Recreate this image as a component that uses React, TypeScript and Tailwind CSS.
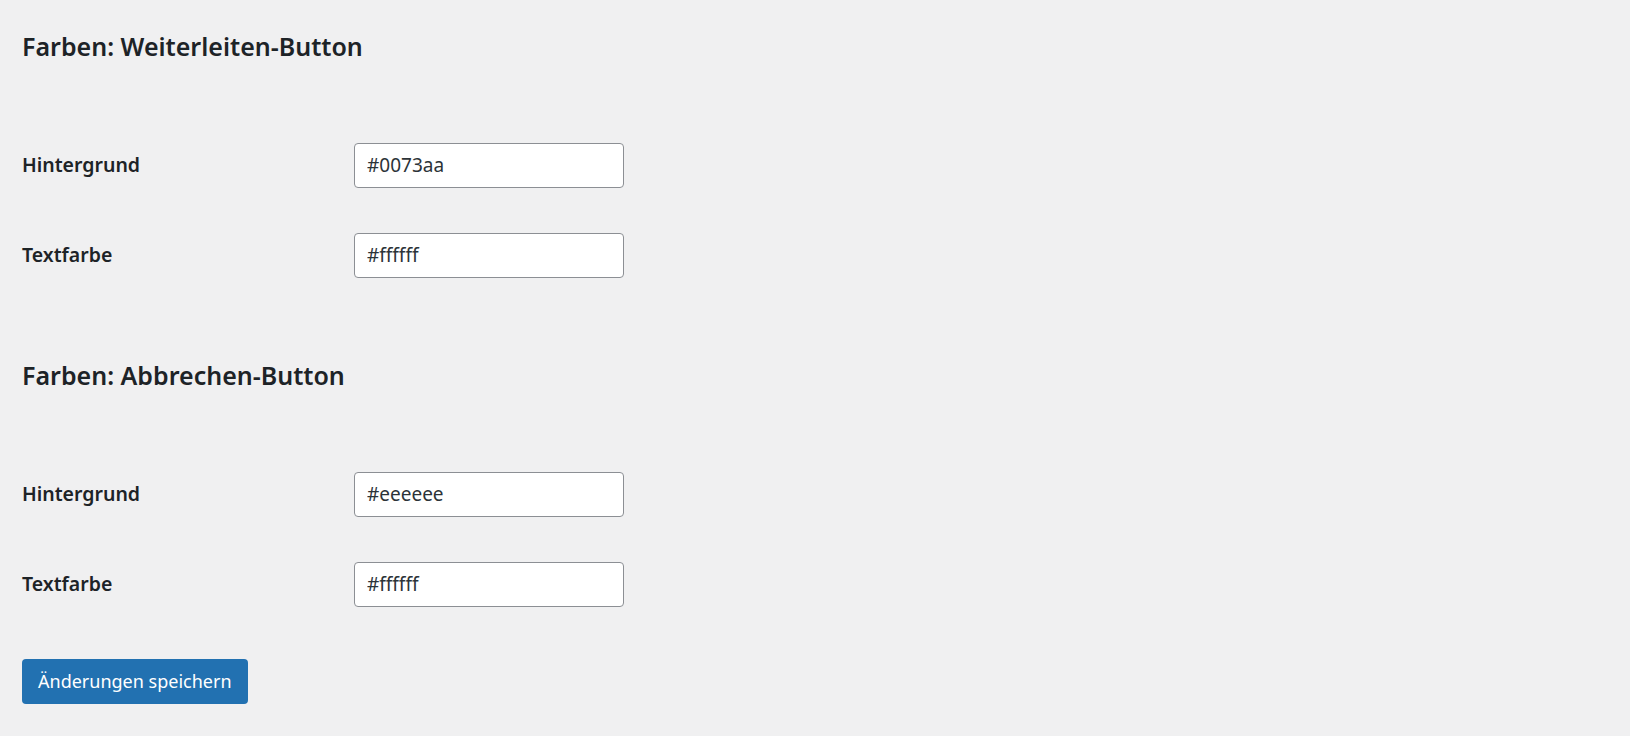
import React from 'react';

interface ColorField {
  id: string;
  label: string;
  value: string;
}

interface Section {
  id: string;
  title: string;
  fields: ColorField[];
}

const SECTIONS: Section[] = [
  {
    id: 'redirect',
    title: 'Farben: Weiterleiten-Button',
    fields: [
      { id: 'redirect-bg', label: 'Hintergrund', value: '#0073aa' },
      { id: 'redirect-text', label: 'Textfarbe', value: '#ffffff' },
    ],
  },
  {
    id: 'cancel',
    title: 'Farben: Abbrechen-Button',
    fields: [
      { id: 'cancel-bg', label: 'Hintergrund', value: '#eeeeee' },
      { id: 'cancel-text', label: 'Textfarbe', value: '#ffffff' },
    ],
  },
];

function FieldRow({ field }: { field: ColorField }) {
  return (
    <div className="flex h-[90px]">
      <label
        htmlFor={field.id}
        className="w-[332px] shrink-0 pt-[32px] text-[19.5px] leading-[1.3] font-semibold text-[#1d2327]"
      >
        {field.label}
      </label>
      <div className="pt-[22.5px]">
        <input
          id={field.id}
          type="text"
          defaultValue={field.value}
          className="w-[270px] h-[45px] rounded-[4px] border border-[#8c8f94] bg-white px-[12px] text-[19px] text-[#2c3338] outline-none"
        />
      </div>
    </div>
  );
}

export default function App() {
  return (
    <div
      className="min-h-screen bg-[#f0f0f1] pl-[22px] pt-[30px]"
      style={{ fontFamily: '"Noto Sans", "Open Sans", sans-serif' }}
    >
      <div className="flex flex-col gap-[59px]">
        {SECTIONS.map((section) => (
          <div key={section.id}>
            <h2 className="text-[25px] leading-[33px] font-semibold text-[#1d2327] mb-[57px]">
              {section.title}
            </h2>
            <div>
              {section.fields.map((field) => (
                <FieldRow key={field.id} field={field} />
              ))}
            </div>
          </div>
        ))}
      </div>
      <button className="mt-[30px] block h-[45px] rounded-[4px] bg-[#2271b1] px-[16px] text-[18px] text-white">
        Änderungen speichern
      </button>
    </div>
  );
}
